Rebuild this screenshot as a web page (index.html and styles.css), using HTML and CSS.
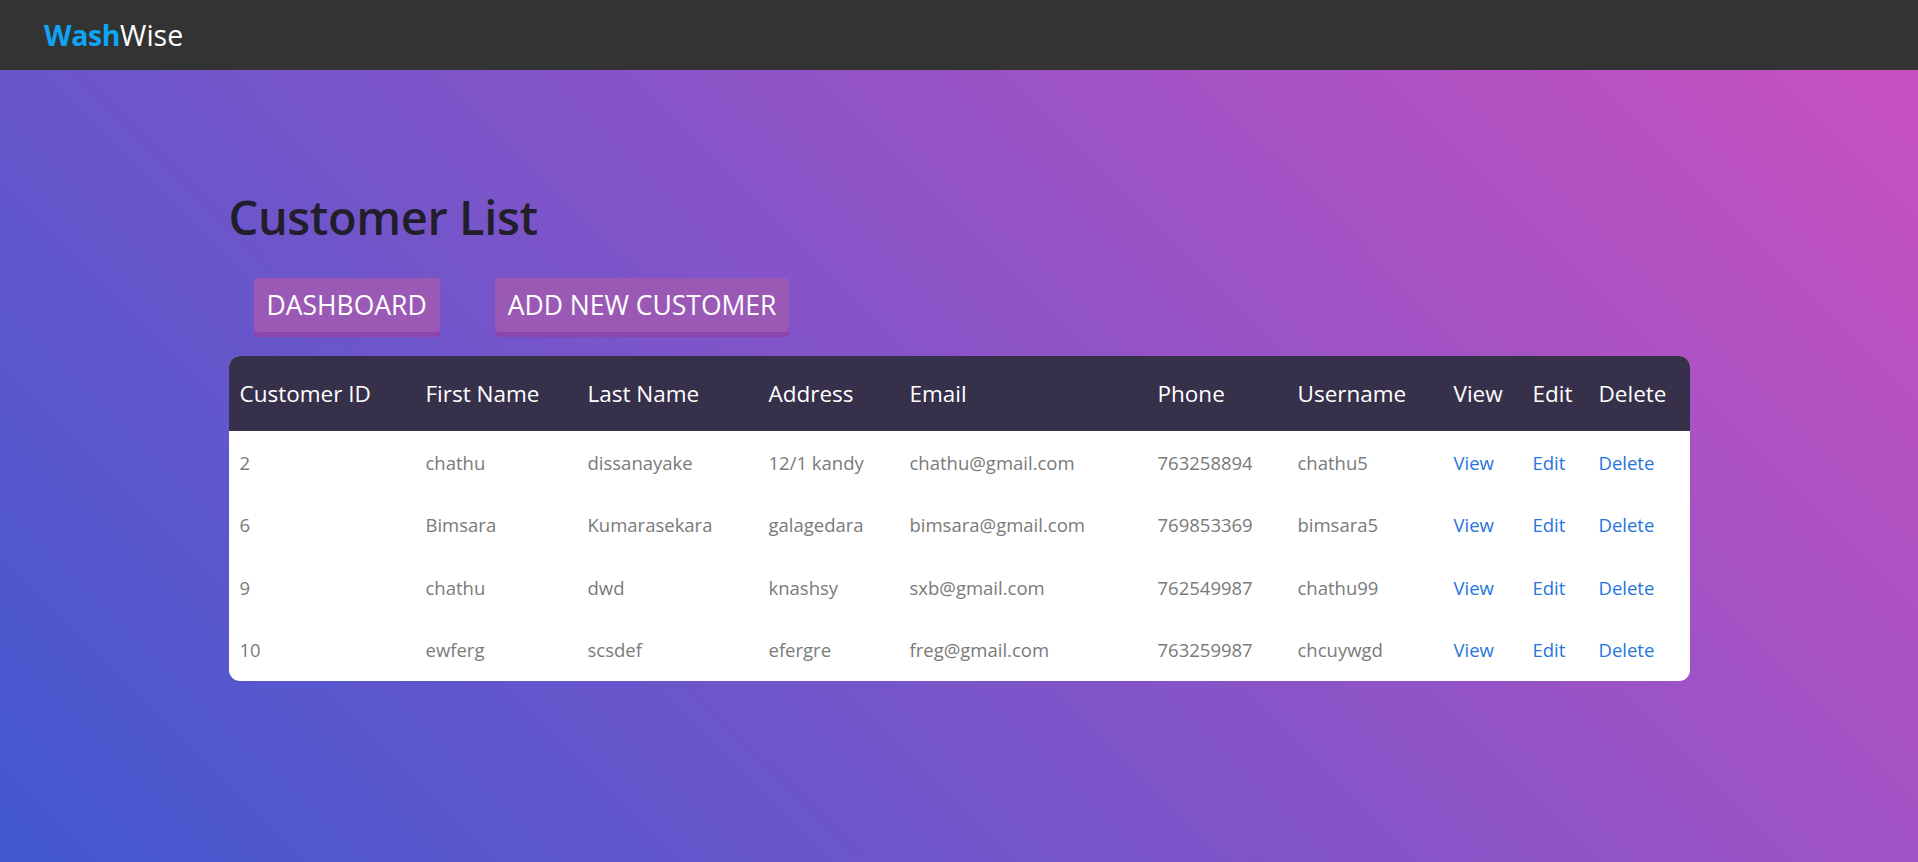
FILE: index.html
```html
<!DOCTYPE html>
<html lang="en">
<head>
<meta charset="utf-8">
<title>Customer List - WashWise</title>
<link rel="stylesheet" href="styles.css">
</head>
<body>
<nav class="navbar">
  <a class="logo" href="#"><span class="logo-wash">Wash</span><span class="logo-wise">Wise</span></a>
</nav>
<main class="page">
  <div class="container">
    <h1 class="title">Customer List</h1>
    <div class="actions">
      <a class="btn" href="#">DASHBOARD</a>
      <a class="btn" href="#">ADD NEW CUSTOMER</a>
    </div>
    <table class="customers">
      <colgroup>
        <col class="c1"><col class="c2"><col class="c3"><col class="c4"><col class="c5">
        <col class="c6"><col class="c7"><col class="c8"><col class="c9"><col class="c10">
      </colgroup>
      <thead>
        <tr>
          <th>Customer ID</th><th>First Name</th><th>Last Name</th><th>Address</th><th>Email</th>
          <th>Phone</th><th>Username</th><th>View</th><th>Edit</th><th>Delete</th>
        </tr>
      </thead>
      <tbody>
        <tr>
          <td>2</td><td>chathu</td><td>dissanayake</td><td>12/1 kandy</td><td>chathu@gmail.com</td>
          <td>763258894</td><td>chathu5</td><td><a href="#">View</a></td><td><a href="#">Edit</a></td><td><a href="#">Delete</a></td>
        </tr>
        <tr>
          <td>6</td><td>Bimsara</td><td>Kumarasekara</td><td>galagedara</td><td>bimsara@gmail.com</td>
          <td>769853369</td><td>bimsara5</td><td><a href="#">View</a></td><td><a href="#">Edit</a></td><td><a href="#">Delete</a></td>
        </tr>
        <tr>
          <td>9</td><td>chathu</td><td>dwd</td><td>knashsy</td><td>sxb@gmail.com</td>
          <td>762549987</td><td>chathu99</td><td><a href="#">View</a></td><td><a href="#">Edit</a></td><td><a href="#">Delete</a></td>
        </tr>
        <tr>
          <td>10</td><td>ewferg</td><td>scsdef</td><td>efergre</td><td>freg@gmail.com</td>
          <td>763259987</td><td>chcuywgd</td><td><a href="#">View</a></td><td><a href="#">Edit</a></td><td><a href="#">Delete</a></td>
        </tr>
      </tbody>
    </table>
  </div>
</main>
</body>
</html>
```

FILE: styles.css
```css
* { box-sizing: border-box; }

html, body {
  margin: 0;
  padding: 0;
  height: 100%;
}

body {
  font-family: "Open Sans", "Noto Sans", Arial, sans-serif;
  display: flex;
  flex-direction: column;
  min-height: 100vh;
  background: #333;
}

.navbar {
  height: 70px;
  background: #333333;
  display: flex;
  align-items: center;
  padding-left: 44px;
  flex-shrink: 0;
}

.logo {
  font-size: 28.5px;
  text-decoration: none;
  line-height: 38px;
}

.logo-wash {
  color: #0ea5f5;
  font-weight: 700;
  letter-spacing: -0.4px;
}

.logo-wise {
  color: #ffffff;
  font-weight: 400;
}

.page {
  flex: 1;
  background: linear-gradient(45deg, #4158D0 0%, #C850C0 100%);
  padding-top: 115px;
}

.container {
  width: 1461px;
  margin: 0 auto;
}

.title {
  margin: 0;
  font-size: 47px;
  font-weight: 600;
  line-height: 65px;
  color: #221f2c;
  letter-spacing: -0.4px;
}

.actions {
  display: flex;
  gap: 55px;
  padding-left: 25px;
  margin-top: 28px;
}

.btn {
  display: inline-block;
  background: #9b59b6;
  color: #ffffff;
  text-decoration: none;
  font-size: 26.5px;
  line-height: 35px;
  padding: 10px 13px 9px;
  border-radius: 4px;
  box-shadow: 0 5px 0 #8e44ad;
}

.customers {
  margin-top: 24px;
  width: 1461px;
  table-layout: fixed;
  border-collapse: separate;
  border-spacing: 0;
  background: #ffffff;
  border-radius: 11px;
  overflow: hidden;
}

.c1 { width: 186px; }
.c2 { width: 162px; }
.c3 { width: 181px; }
.c4 { width: 141px; }
.c5 { width: 248px; }
.c6 { width: 140px; }
.c7 { width: 156px; }
.c8 { width: 79px; }
.c9 { width: 66px; }
.c10 { width: 102px; }

.customers th {
  background: #37304b;
  color: #ffffff;
  font-weight: 400;
  font-size: 22.5px;
  text-align: left;
  height: 75px;
  padding: 0 11px;
  white-space: nowrap;
}

.customers td {
  font-size: 18.5px;
  color: #7a7a7a;
  height: 62.5px;
  padding: 0 11px;
  white-space: nowrap;
}

.customers td a {
  color: #2675dd;
  text-decoration: none;
}
```
